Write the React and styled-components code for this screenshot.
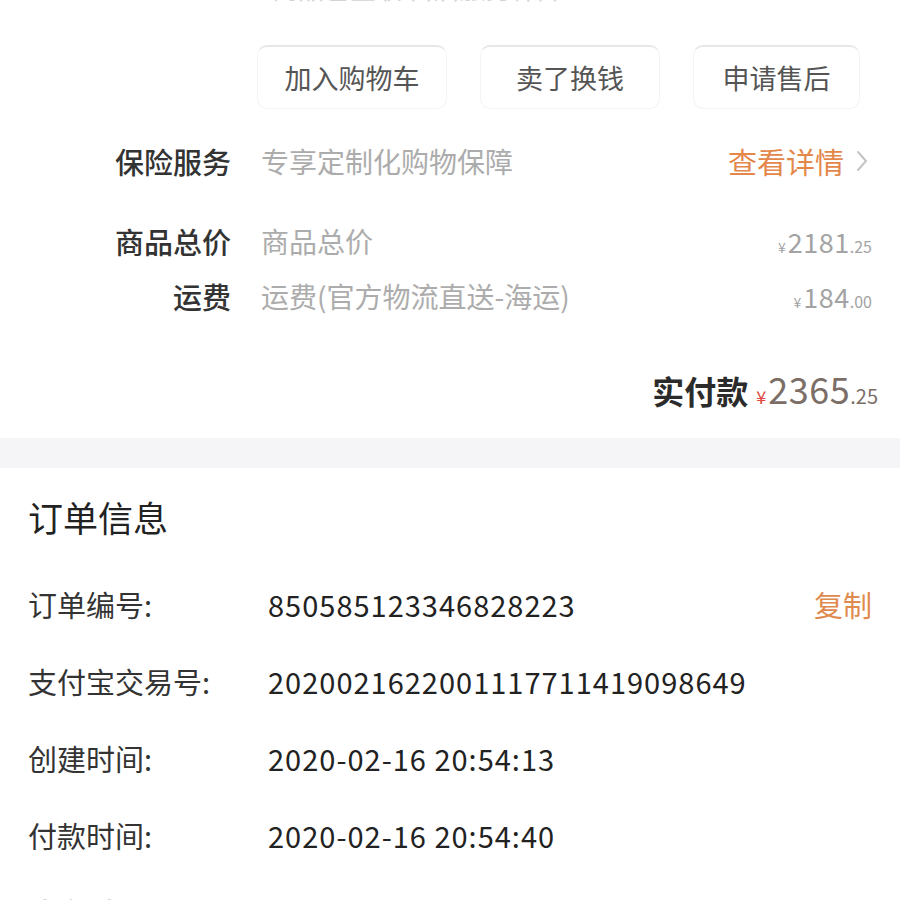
import React from "react";
import styled, { createGlobalStyle } from "styled-components";

const Global = createGlobalStyle`
  html, body { margin: 0; padding: 0; background: #ffffff; }
  body { font-family: "Noto Sans CJK SC", "Noto Sans", sans-serif; width: 900px; overflow: hidden; }
  * { box-sizing: border-box; }
`;

const Page = styled.div`
  width: 900px;
  height: 900px;
  overflow: hidden;
  background: #fff;
`;

const CutLine = styled.div`
  height: 3px;
  overflow: hidden;
  display: flex;
  align-items: flex-end;
  padding-left: 272px;
  color: #d6d2d2;
  font-size: 26px;
  line-height: 30px;
  margin-bottom: 2px;
`;

const ActionRow = styled.div`
  display: flex;
  justify-content: flex-end;
  gap: 33px;
  padding-right: 40px;
  margin-top: 42px;
`;

const ActionButton = styled.div`
  width: ${(p) => p.$w}px;
  height: 64px;
  display: flex;
  align-items: center;
  justify-content: center;
  border: 1px solid #f4f3f5;
  border-top: 2px solid #e8e6e9;
  border-radius: 10px;
  color: #555;
  font-size: 27px;
`;

const Detail = styled.div`
  display: flex;
  flex-direction: column;
  padding: 0 28px 0 110px;
`;

const DetailRow = styled.div`
  display: grid;
  grid-template-columns: 121px 1fr auto;
  column-gap: 30px;
  align-items: center;
  height: ${(p) => p.$h}px;
  margin-top: ${(p) => p.$mt || 0}px;
`;

const Label = styled.div`
  text-align: right;
  font-size: 29px;
  font-weight: 500;
  color: #333;
  white-space: nowrap;
`;

const Value = styled.div`
  font-size: 28px;
  color: #acacac;
  white-space: nowrap;
`;

const Link = styled.div`
  display: flex;
  align-items: center;
  gap: 12px;
  margin-right: 4px;
  font-size: 29px;
  color: #e4874a;
`;

const Price = styled.div`
  display: flex;
  align-items: baseline;
  color: #a3a3a3;
`;

const Yen = styled.span`
  font-size: ${(p) => p.$s || 14}px;
  color: ${(p) => p.$c || "inherit"};
  margin-right: 2px;
`;

const Int = styled.span`
  font-size: ${(p) => p.$s || 27}px;
  letter-spacing: 0.5px;
`;

const Dec = styled.span`
  font-size: ${(p) => p.$s || 16}px;
`;

const TotalRow = styled.div`
  display: flex;
  justify-content: flex-end;
  align-items: baseline;
  padding-right: 22px;
  margin-top: 35px;
  height: 50px;
`;

const TotalLabel = styled.span`
  font-size: 32px;
  font-weight: 600;
  color: #2b2b2b;
  margin-right: 8px;
`;

const TotalPrice = styled(Price)`
  color: #7b6e66;
`;

const Band = styled.div`
  height: 30px;
  margin-top: 26px;
  background: #f5f4f7;
`;

const Info = styled.div`
  display: flex;
  flex-direction: column;
  padding: 23px 28px 0 28px;
`;

const Heading = styled.div`
  font-size: 35px;
  line-height: 52px;
  color: #222;
  margin-bottom: 22px;
`;

const InfoRow = styled.div`
  display: grid;
  grid-template-columns: 240px 1fr auto;
  align-items: center;
  height: 77px;
`;

const InfoLabel = styled.div`
  font-size: 29px;
  color: #333;
  white-space: nowrap;
`;

const InfoValue = styled.div`
  font-size: 29px;
  color: #222;
  letter-spacing: 1px;
  white-space: nowrap;
`;

const Copy = styled.div`
  font-size: 29px;
  color: #df8a4e;
`;

const Chevron = () => (
  <svg width="12" height="22" viewBox="0 0 12 22" fill="none">
    <path d="M2 2l8 9-8 9" stroke="#c4c4c4" strokeWidth="2" strokeLinecap="round" strokeLinejoin="round" />
  </svg>
);

const infoRows = [
  ["订单编号:", "850585123346828223", true],
  ["支付宝交易号:", "2020021622001117711419098649"],
  ["创建时间:", "2020-02-16 20:54:13"],
  ["付款时间:", "2020-02-16 20:54:40"],
  ["成交时间:", "2020-02-16 20:54:41"],
];

export default function App() {
  return (
    <Page>
      <Global />
      <CutLine>商品已签收 售后服务保障</CutLine>
      <ActionRow>
        <ActionButton $w={190}>加入购物车</ActionButton>
        <ActionButton $w={180}>卖了换钱</ActionButton>
        <ActionButton $w={167}>申请售后</ActionButton>
      </ActionRow>
      <Detail>
        <DetailRow $h={104}>
          <Label>保险服务</Label>
          <Value>专享定制化购物保障</Value>
          <Link>
            查看详情
            <Chevron />
          </Link>
        </DetailRow>
        <DetailRow $h={48} $mt={4}>
          <Label>商品总价</Label>
          <Value>商品总价</Value>
          <Price>
            <Yen>¥</Yen>
            <Int>2181</Int>
            <Dec>.25</Dec>
          </Price>
        </DetailRow>
        <DetailRow $h={62}>
          <Label>运费</Label>
          <Value>运费(官方物流直送-海运)</Value>
          <Price>
            <Yen>¥</Yen>
            <Int>184</Int>
            <Dec>.00</Dec>
          </Price>
        </DetailRow>
      </Detail>
      <TotalRow>
        <TotalLabel>实付款</TotalLabel>
        <TotalPrice>
          <Yen $s={18} $c="#e0483e">¥</Yen>
          <Int $s={36}>2365</Int>
          <Dec $s={20}>.25</Dec>
        </TotalPrice>
      </TotalRow>
      <Band />
      <Info>
        <Heading>订单信息</Heading>
        {infoRows.map(([l, v, c]) => (
          <InfoRow key={l}>
            <InfoLabel>{l}</InfoLabel>
            <InfoValue>{v}</InfoValue>
            {c ? <Copy>复制</Copy> : <span />}
          </InfoRow>
        ))}
      </Info>
    </Page>
  );
}
